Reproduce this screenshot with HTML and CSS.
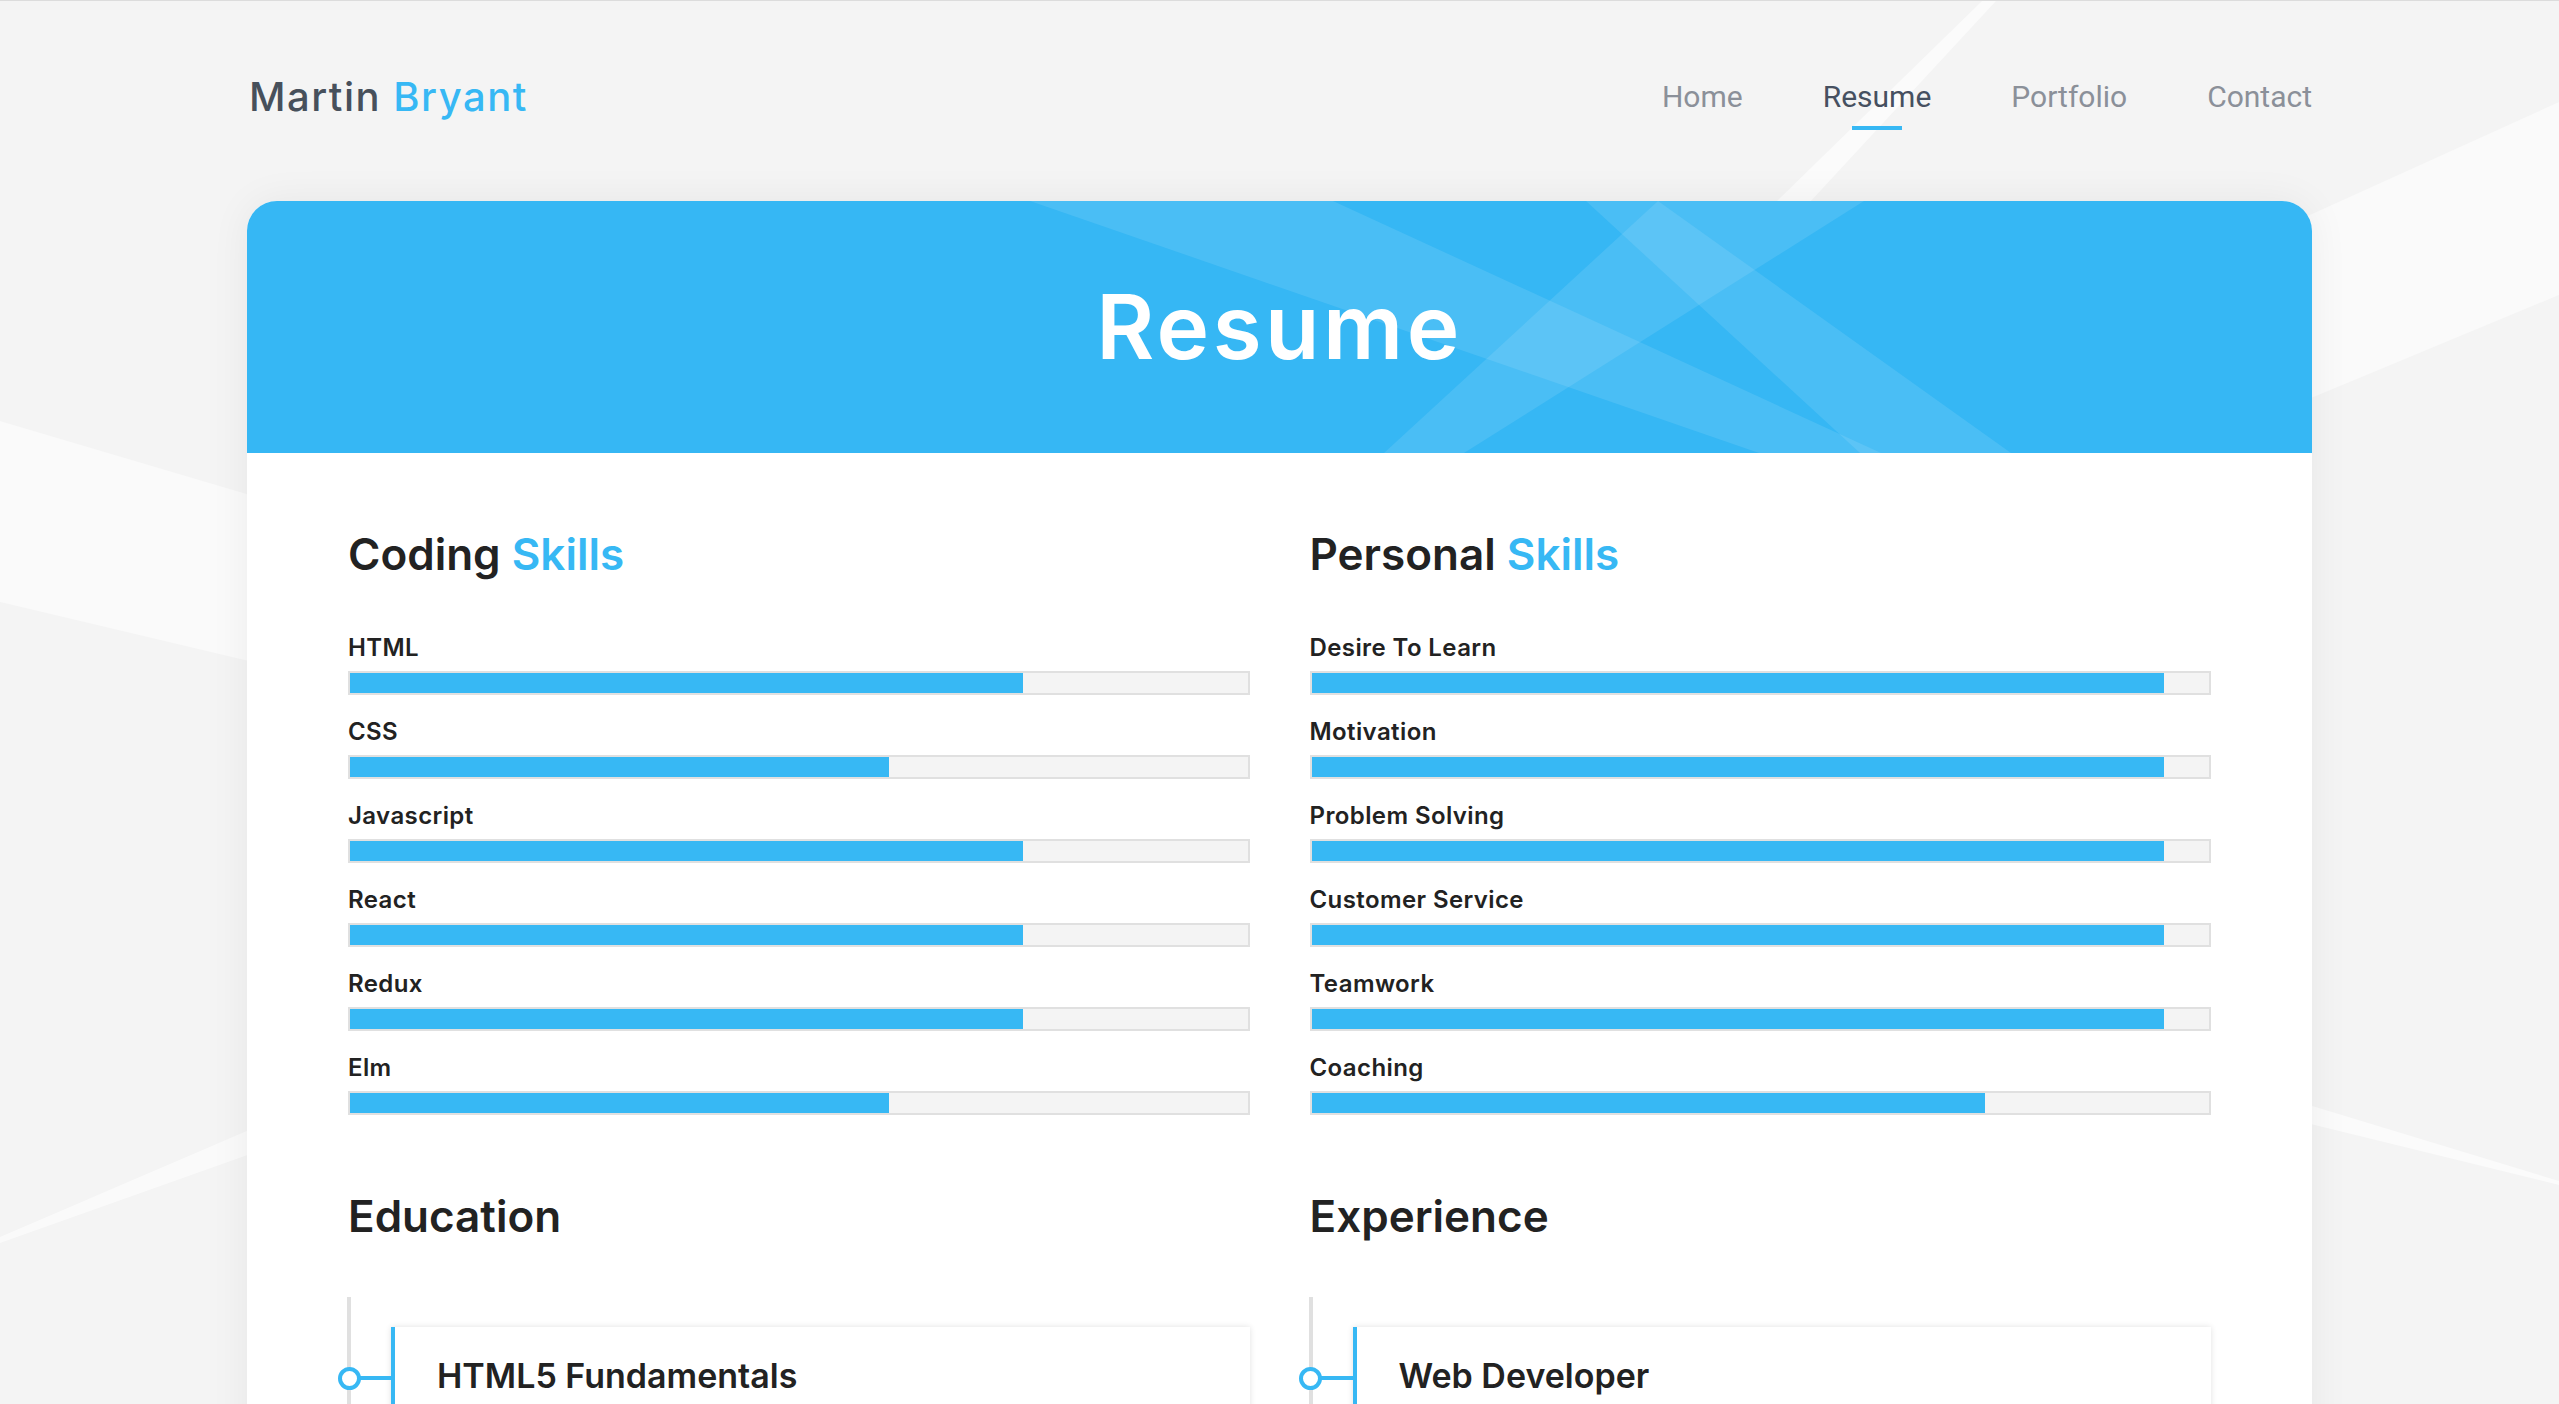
FILE: index.html
```html
<!DOCTYPE html>
<html lang="en">
<head>
<meta charset="utf-8">
<title>Martin Bryant - Resume</title>
<link rel="stylesheet" href="styles.css">
</head>
<body>
<svg class="bg-art" viewBox="0 0 2559 1404" preserveAspectRatio="none" aria-hidden="true">
  <polygon points="0,420 1300,805 1300,910 0,601" fill="#ffffff" fill-opacity="0.5"/>
  <polygon points="1900,400 2559,101 2559,294 1900,568" fill="#ffffff" fill-opacity="0.5"/>
  <polygon points="1982,0 1996,0 1810,201 1776,201" fill="#ffffff" fill-opacity="0.6"/>
  <polygon points="0,1236 400,1064 400,1100 0,1242" fill="#ffffff" fill-opacity="0.55"/>
  <polygon points="2200,1071 2559,1180 2559,1184 2200,1096" fill="#ffffff" fill-opacity="0.6"/>
</svg>
<div class="page">
  <header class="topbar">
    <a class="logo" href="#">Martin <span class="accent">Bryant</span></a>
    <nav class="nav">
      <a href="#">Home</a>
      <a href="#" class="active">Resume</a>
      <a href="#">Portfolio</a>
      <a href="#">Contact</a>
    </nav>
  </header>

  <main class="card">
    <div class="card-head">
      <svg class="head-art" viewBox="0 0 2065 252" preserveAspectRatio="none" aria-hidden="true">
        <polygon points="783,0 1086,0 1634,252 1512,252" fill="#ffffff" fill-opacity="0.1"/>
        <polygon points="1339,0 1411,0 1764,252 1613,252" fill="#ffffff" fill-opacity="0.1"/>
        <polygon points="1411,0 1617,0 1217,252 1137,252" fill="#ffffff" fill-opacity="0.1"/>
      </svg>
      <h1 class="title">Resume</h1>
    </div>

    <div class="card-body">
      <section class="block">
        <h2 class="block-title">Coding <span class="accent">Skills</span></h2>
        <ul class="skills">
          <li class="skill"><span class="skill-name">HTML</span><div class="track"><div class="fill" style="width:75%"></div></div></li>
          <li class="skill"><span class="skill-name">CSS</span><div class="track"><div class="fill" style="width:60%"></div></div></li>
          <li class="skill"><span class="skill-name">Javascript</span><div class="track"><div class="fill" style="width:75%"></div></div></li>
          <li class="skill"><span class="skill-name">React</span><div class="track"><div class="fill" style="width:75%"></div></div></li>
          <li class="skill"><span class="skill-name">Redux</span><div class="track"><div class="fill" style="width:75%"></div></div></li>
          <li class="skill"><span class="skill-name">Elm</span><div class="track"><div class="fill" style="width:60%"></div></div></li>
        </ul>
      </section>

      <section class="block">
        <h2 class="block-title">Personal <span class="accent">Skills</span></h2>
        <ul class="skills">
          <li class="skill"><span class="skill-name">Desire To Learn</span><div class="track"><div class="fill" style="width:95%"></div></div></li>
          <li class="skill"><span class="skill-name">Motivation</span><div class="track"><div class="fill" style="width:95%"></div></div></li>
          <li class="skill"><span class="skill-name">Problem Solving</span><div class="track"><div class="fill" style="width:95%"></div></div></li>
          <li class="skill"><span class="skill-name">Customer Service</span><div class="track"><div class="fill" style="width:95%"></div></div></li>
          <li class="skill"><span class="skill-name">Teamwork</span><div class="track"><div class="fill" style="width:95%"></div></div></li>
          <li class="skill"><span class="skill-name">Coaching</span><div class="track"><div class="fill" style="width:75%"></div></div></li>
        </ul>
      </section>

      <section class="block">
        <h2 class="block-title">Education</h2>
        <div class="timeline">
          <article class="entry">
            <span class="entry-dot"></span><span class="entry-link"></span>
            <h3 class="entry-title">HTML5 Fundamentals</h3>
          </article>
        </div>
      </section>

      <section class="block">
        <h2 class="block-title">Experience</h2>
        <div class="timeline">
          <article class="entry">
            <span class="entry-dot"></span><span class="entry-link"></span>
            <h3 class="entry-title">Web Developer</h3>
          </article>
        </div>
      </section>
    </div>
  </main>
</div>
</body>
</html>
```

FILE: styles.css
```css
* { box-sizing: border-box; }

html {
  border-top: 1px solid #dcdcdc;
  background: #f4f4f4;
}

body {
  margin: 0;
  background: #f4f4f4;
  font-family: Inter, "Noto Sans", sans-serif;
  color: #222222;
  position: relative;
  min-height: 1403px;
  overflow: hidden;
}

.bg-art {
  position: absolute;
  top: 0;
  left: 0;
  width: 2559px;
  height: 1404px;
  z-index: 0;
  pointer-events: none;
}

.page {
  position: relative;
  z-index: 1;
  width: 2065px;
  margin: 0 auto;
}

.topbar {
  height: 191px;
  display: flex;
  align-items: center;
  justify-content: space-between;
  padding-left: 2px;
}

.logo {
  font-family: Inter, "Noto Sans", sans-serif;
  font-size: 40px;
  line-height: 48px;
  font-weight: 500;
  letter-spacing: 1.5px;
  color: #47505b;
  text-decoration: none;
}

.accent { color: #37b8f4; }

.nav {
  display: flex;
  gap: 80px;
}

.nav a {
  position: relative;
  font-family: Roboto, "Liberation Sans", sans-serif;
  font-size: 30px;
  line-height: 36px;
  color: #8b9099;
  text-decoration: none;
}

.nav a.active { color: #465060; }

.nav a.active::after {
  content: "";
  position: absolute;
  top: 47px;
  left: 50%;
  width: 50px;
  height: 4px;
  margin-left: -25px;
  background: #37b8f4;
}

.card {
  margin-top: 9px;
  background: #ffffff;
  border-radius: 30px 30px 0 0;
  box-shadow: 0 0 40px rgba(0, 0, 0, 0.06);
}

.card-head {
  position: relative;
  height: 252px;
  background: #36b7f4;
  border-radius: 30px 30px 0 0;
  overflow: hidden;
  display: flex;
  align-items: center;
  justify-content: center;
}

.head-art {
  position: absolute;
  inset: 0;
  width: 100%;
  height: 100%;
}

.title {
  position: relative;
  margin: 0;
  font-size: 89px;
  line-height: 100px;
  font-weight: 600;
  letter-spacing: 3.5px;
  color: #ffffff;
}

.card-body {
  display: grid;
  grid-template-columns: 1fr 1fr;
  column-gap: 60px;
  row-gap: 74px;
  padding: 74px 101px 120px;
}

.block-title {
  margin: 0 0 52px;
  font-size: 44px;
  line-height: 54px;
  font-weight: 600;
  color: #222222;
}

.skills {
  list-style: none;
  margin: 0;
  padding: 0;
}

.skill {
  display: flex;
  flex-direction: column;
  gap: 8px;
  margin-bottom: 22px;
}

.skill:last-child { margin-bottom: 0; }

.skill-name {
  font-size: 24px;
  line-height: 30px;
  font-weight: 600;
  letter-spacing: 0.4px;
  color: #222222;
}

.track {
  height: 24px;
  border: 2px solid #e0e0e0;
  background: #f4f4f4;
}

.fill {
  height: 100%;
  background: #37b8f4;
}

.block-title + .timeline { margin-top: 54px; }
.block:nth-child(n+3) .block-title { margin-bottom: 54px; }

.timeline {
  margin-left: -1px;
  border-left: 4px solid #e0e0e0;
  padding-top: 30px;
}

.entry {
  position: relative;
  margin-left: 40px;
  background: #ffffff;
  border-left: 4px solid #37b8f4;
  box-shadow: 0 0 6px rgba(0, 0, 0, 0.12);
  padding: 28px 40px 80px 42px;
}

.entry-link {
  position: absolute;
  left: -36px;
  top: 49px;
  width: 36px;
  height: 4px;
  background: #37b8f4;
}

.entry-dot {
  position: absolute;
  left: -57.5px;
  top: 39.5px;
  width: 23px;
  height: 23px;
  border: 4px solid #37b8f4;
  border-radius: 50%;
  background: #ffffff;
  z-index: 1;
}

.entry-title {
  margin: 0;
  font-size: 34px;
  line-height: 42px;
  font-weight: 600;
  color: #222222;
}
```
